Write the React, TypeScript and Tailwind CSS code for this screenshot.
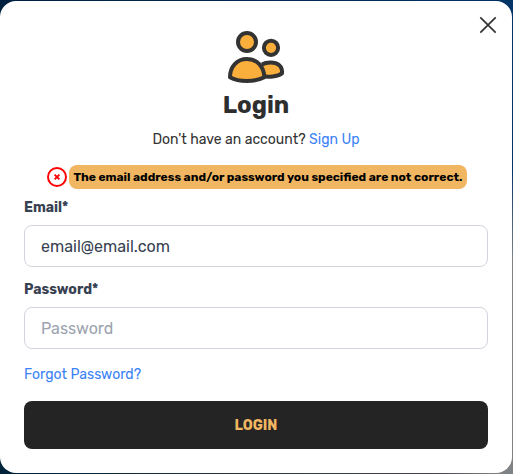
import { useState } from "react";

function UsersIcon() {
  return (
    <svg width="60" height="56" viewBox="226 29 60 56" fill="#faae3b" stroke="#333" strokeWidth="4" strokeLinejoin="round">
      <circle cx="271" cy="47.8" r="7.1" />
      <path d="M262 64.5C266 62 275 61.3 279 65C281.5 67.2 282.3 70 282 73.3C277.5 76.8 268 77.2 262.5 76" />
      <circle cx="247" cy="42" r="9" />
      <path d="M230 77.2C230 66.5 237 59 247 59C257 59 264 66.5 264.3 77.2C259 80 253 81 247 81C240 81 234.5 79.8 230 77.2Z" />
    </svg>
  );
}

function CloseIcon() {
  return (
    <svg width="18" height="18" viewBox="0 0 18 18" stroke="#333" strokeWidth="1.7">
      <path d="M1.3 1.3 16.7 16.7M16.7 1.3 1.3 16.7" />
    </svg>
  );
}

function ErrorIcon() {
  return (
    <svg width="20" height="20" viewBox="0 0 20 20" fill="none" stroke="#ff0000">
      <circle cx="10" cy="10" r="9" strokeWidth="2" />
      <path d="M7.6 7.6 12.4 12.4M12.4 7.6 7.6 12.4" strokeWidth="1.9" />
    </svg>
  );
}

const inputClass =
  "block h-[42px] w-full rounded-lg border border-[#d1d5db] px-4 text-base text-[#374151] outline-none placeholder:text-[#9ca3af]";
const labelClass = "mb-[7px] block h-5 text-sm leading-5 font-bold text-[#374151]";

export default function App() {
  const [email, setEmail] = useState("email@email.com");
  const [password, setPassword] = useState("");
  return (
    <div className="h-[474px] w-[513px] bg-[linear-gradient(90deg,#00213f,#003064)] font-['Rubik','Roboto',sans-serif]">
      <div className="h-full bg-[linear-gradient(180deg,#003366_35%,#808386_55%),linear-gradient(90deg,#00233c_10%,#263442_45%,#45454f_85%,#808386_97%)] [background-size:3%_100%,100%_50%] bg-no-repeat pt-px [background-position:right_top,left_bottom]">
        <main className="relative h-[472px] w-[512px] rounded-2xl bg-white px-6 pt-7">
          <button aria-label="Close" className="absolute top-[15px] right-[15px]">
            <CloseIcon />
          </button>
          <header className="flex flex-col items-center">
            <UsersIcon />
            <h1 className="mt-1 h-8 text-2xl leading-8 font-bold text-[#2e2e2e]">Login</h1>
            <p className="mt-[9px] h-5 text-sm leading-5 text-[#333]">
              Don't have an account? <a className="text-[#3b82f6]">Sign Up</a>
            </p>
          </header>
          <div className="mt-[15px] -mr-0.5 flex h-6 items-center justify-center gap-0.5">
            <ErrorIcon />
            <p className="h-6 w-[398px] rounded-lg bg-[#f0b661] text-center text-xs leading-6 font-bold text-black">
              The email address and/or password you specified are not correct.
            </p>
          </div>
          <form className="mt-[9px]">
            <label className={labelClass} htmlFor="email">Email*</label>
            <input id="email" className={inputClass} value={email} onChange={(e) => setEmail(e.target.value)} />
            <label className={labelClass + " mt-[13px]"} htmlFor="password">Password*</label>
            <input id="password" type="password" placeholder="Password" className={inputClass} value={password} onChange={(e) => setPassword(e.target.value)} />
            <a className="mt-4 block h-5 text-sm leading-5 text-[#3b82f6]">Forgot Password?</a>
            <button type="button" className="mt-4 h-12 w-full rounded-lg bg-[#242424] pt-0.5 text-sm font-bold text-[#f0b661]">LOGIN</button>
          </form>
        </main>
      </div>
    </div>
  );
}
